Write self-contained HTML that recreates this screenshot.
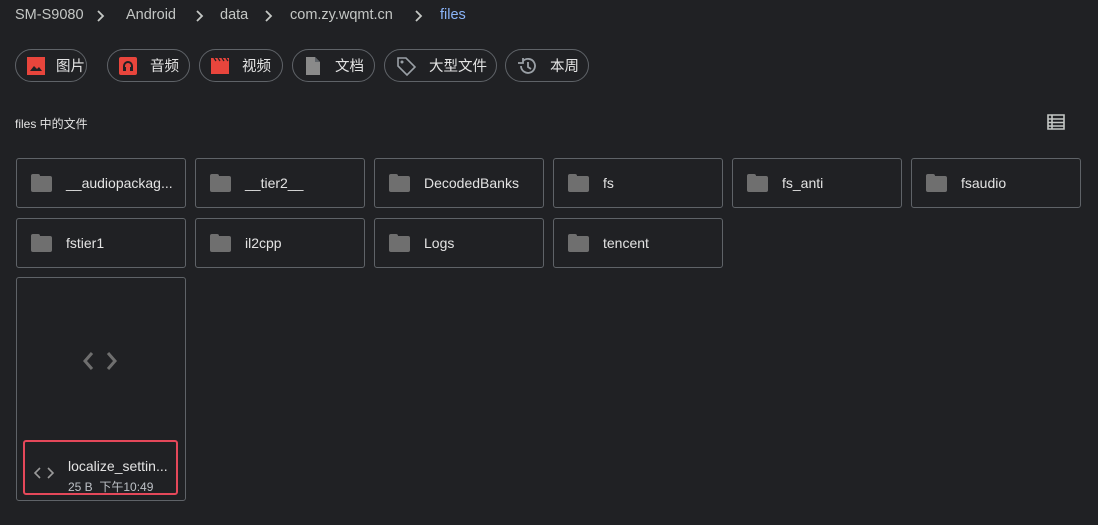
<!DOCTYPE html>
<html><head><meta charset="utf-8"><style>
*{box-sizing:border-box;margin:0;padding:0}
body{width:1098px;height:525px;background:#202124;font-family:"Liberation Sans","Noto Sans CJK SC",sans-serif;color:#e8eaed;position:relative;overflow:hidden}
.a{position:absolute}
.bc{top:7px;font-size:14.5px;color:#c4c7c5;white-space:nowrap}
.chev{top:9px}
.chip{top:49px;height:33px;border:1px solid #5f6368;border-radius:17px;font-size:14.5px;color:#e3e3e3;display:flex;align-items:center;padding-left:10px;white-space:nowrap}
.chip svg{margin-right:12px;flex:none}
.card{border:1px solid #5f6368;border-radius:3px;width:170px;height:50px;display:flex;align-items:center;font-size:14px;color:#e3e3e3;white-space:nowrap;overflow:hidden}
.card .f{flex:none;width:21px;height:16px;margin-left:14px;margin-right:14px;background:#6f6f6f;border-radius:2px;position:relative;top:1px}
.card .f:before{content:"";position:absolute;left:0;top:-2px;width:9px;height:4px;background:#6f6f6f;border-radius:2px 2px 0 0}
</style></head><body>
<div class="a bc" style="left:15px">SM-S9080</div>
<svg class="a chev" style="left:96px" width="10" height="14"><path d="M2 2l5 5-5 5" fill="none" stroke="#c4c7c5" stroke-width="1.8"/></svg>
<div class="a bc" style="left:126px">Android</div>
<svg class="a chev" style="left:195px" width="10" height="14"><path d="M2 2l5 5-5 5" fill="none" stroke="#c4c7c5" stroke-width="1.8"/></svg>
<div class="a bc" style="left:220px">data</div>
<svg class="a chev" style="left:264px" width="10" height="14"><path d="M2 2l5 5-5 5" fill="none" stroke="#c4c7c5" stroke-width="1.8"/></svg>
<div class="a bc" style="left:290px">com.zy.wqmt.cn</div>
<svg class="a chev" style="left:414px" width="10" height="14"><path d="M2 2l5 5-5 5" fill="none" stroke="#c4c7c5" stroke-width="1.8"/></svg>
<div class="a bc" style="left:440px;color:#8ab4f8">files</div>

<div class="a chip" style="left:15px;width:72px"><svg width="20" height="20" style="margin-right:10px"><rect x="1" y="1" width="18" height="18" fill="#e8453c"/><path d="M4 15l4-5 3 3 2-2 3 4z" fill="#202124"/></svg>图片</div>
<div class="a chip" style="left:107px;width:83px"><svg width="20" height="20"><rect x="1" y="1" width="18" height="18" rx="2" fill="#e8453c"/><path d="M5 15v-5a5 5 0 0 1 10 0v5h-3v-4h1v-1a3 3 0 0 0-6 0v1h1v4z" fill="#202124"/></svg>音频</div>
<div class="a chip" style="left:199px;width:84px"><svg width="20" height="20"><rect x="1" y="5" width="18" height="13" fill="#e8453c"/><path d="M1 2h18v3H1z" fill="#e8453c"/><path d="M4 2l2 3M8 2l2 3M12 2l2 3M16 2l2 3" stroke="#202124" stroke-width="1.3"/></svg>视频</div>
<div class="a chip" style="left:292px;width:83px"><svg width="20" height="20"><path d="M3 1h9l5 5v13H3z" fill="#8a8a8a"/><path d="M12 1v5h5" fill="#5f6368"/></svg>文档</div>
<div class="a chip" style="left:384px;width:113px"><svg width="22" height="22"><path d="M3 3h8l9 9-8 8-9-9z" fill="none" stroke="#9aa0a6" stroke-width="1.6"/><circle cx="7" cy="7" r="1.5" fill="#9aa0a6"/></svg>大型文件</div>
<div class="a chip" style="left:505px;width:84px"><svg width="22" height="22"><path d="M5 11a7 7 0 1 0 2-5" fill="none" stroke="#9aa0a6" stroke-width="1.8"/><path d="M2 8h5V3" fill="none" stroke="#9aa0a6" stroke-width="1.8"/><path d="M12 7v5l3 2" fill="none" stroke="#9aa0a6" stroke-width="1.8"/></svg>本周</div>

<div class="a" style="left:15px;top:115px;font-size:12px;color:#e3e3e3">files 中的文件</div>
<svg class="a" style="left:1047px;top:114px" width="18" height="16"><path d="M1 1h16v14H1zM1 5h16M1 8.5h16M1 12h16M5 1v14" fill="none" stroke="#c4c7c5" stroke-width="1.6"/></svg>

<div class="a card" style="left:16px;top:158px"><div class="f"></div>__audiopackag...</div>
<div class="a card" style="left:195px;top:158px"><div class="f"></div>__tier2__</div>
<div class="a card" style="left:374px;top:158px"><div class="f"></div>DecodedBanks</div>
<div class="a card" style="left:553px;top:158px"><div class="f"></div>fs</div>
<div class="a card" style="left:732px;top:158px"><div class="f"></div>fs_anti</div>
<div class="a card" style="left:911px;top:158px"><div class="f"></div>fsaudio</div>
<div class="a card" style="left:16px;top:218px"><div class="f"></div>fstier1</div>
<div class="a card" style="left:195px;top:218px"><div class="f"></div>il2cpp</div>
<div class="a card" style="left:374px;top:218px"><div class="f"></div>Logs</div>
<div class="a card" style="left:553px;top:218px"><div class="f"></div>tencent</div>

<div class="a" style="left:16px;top:277px;width:170px;height:224px;border:1px solid #5f6368;border-radius:3px"></div>
<svg class="a" style="left:82px;top:350px" width="36" height="22"><path d="M10 3l-7 8 7 8M26 3l7 8-7 8" fill="none" stroke="#6f6f6f" stroke-width="3"/></svg>
<div class="a" style="left:23px;top:440px;width:155px;height:55px;border:2px solid #e5485a;border-radius:3px"></div>
<svg class="a" style="left:33px;top:466px" width="22" height="14"><path d="M7 2l-5 5 5 5M15 2l5 5-5 5" fill="none" stroke="#9a9a9a" stroke-width="1.6"/></svg>
<div class="a" style="left:68px;top:458px;font-size:14px;color:#e3e3e3">localize_settin...</div>
<div class="a" style="left:68px;top:478px;font-size:12px;color:#bdc1c6">25 B&nbsp; 下午10:49</div>
</body></html>
